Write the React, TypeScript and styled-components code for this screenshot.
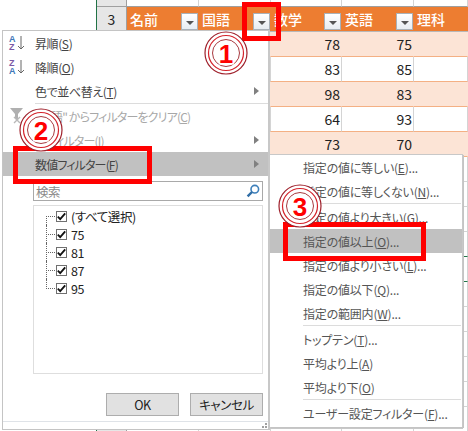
import React from 'react';
import styled, { createGlobalStyle } from 'styled-components';

const GlobalStyle = createGlobalStyle`
  html, body {
    margin: 0;
    padding: 0;
    background: #fff;
  }
  body {
    font-family: "Noto Sans CJK JP", "Liberation Sans", sans-serif;
    font-feature-settings: "palt";
  }
`;

const Page = styled.div`
  position: relative;
  width: 468px;
  height: 431px;
  overflow: hidden;
  background: #fff;
`;

/* sheet behind the menus */
const Sheet = styled.div`
  display: flex;
  flex-direction: column;
`;

const Row = styled.div<{ $height: number }>`
  display: grid;
  grid-template-columns: 97px 30px 72px 72px 71px 72px 54px;
  height: ${(p) => p.$height}px;
`;

const Gutter = styled.div`
  border-right: 1px solid #217346;
`;

const RowHead = styled.div`
  display: flex;
  align-items: center;
  justify-content: center;
  background: #e6e6e6;
  border-right: 1px solid #9f9f9f;
  border-bottom: 1px solid #9f9f9f;
  font-size: 14px;
  color: #222;
`;

const BlankCell = styled.div`
  border-right: 1px solid #d4d4d4;
  border-bottom: 1px solid #9f9f9f;
`;

const HeadCell = styled.div`
  display: flex;
  align-items: flex-end;
  justify-content: space-between;
  background: #ed7d31;
  border-bottom: 1px solid #b8b8b8;
  padding: 0 1px 1px 3px;
  color: #fff;
  font-size: 14px;
  font-weight: 500;
  font-feature-settings: normal;
`;

const HeadLabel = styled.span`
  align-self: center;
  line-height: 20px;
`;

const FilterButton = styled.span`
  display: flex;
  align-items: center;
  justify-content: center;
  box-sizing: border-box;
  width: 17px;
  height: 17px;
  background: linear-gradient(#fff, #e8edf2);
  border: 1px solid #a9b1b8;
  &::after {
    content: '';
    border-left: 4px solid transparent;
    border-right: 4px solid transparent;
    border-top: 4px solid #555;
    margin-top: 2px;
  }
`;

const Cell = styled.div<{ $pink?: boolean; $line: string }>`
  display: flex;
  align-items: center;
  justify-content: flex-end;
  box-sizing: border-box;
  background: ${(p) => (p.$pink ? '#fce4d6' : '#fff')};
  border-bottom: 1px solid ${(p) => p.$line};
  border-right: 1px solid ${(p) => (p.$pink ? 'transparent' : '#d4d4d4')};
  padding-right: 1px;
  font-size: 14px;
  color: #222;
`;

/* main filter dropdown */
const Menu = styled.div`
  position: absolute;
  left: 2px;
  top: 30px;
  box-sizing: border-box;
  width: 268px;
  height: 400px;
  display: flex;
  flex-direction: column;
  background: #fff;
  border: 1px solid #c4c4c4;
  border-right: 2px solid #c8c8c8;
  font-size: 12px;
  letter-spacing: -0.4px;
  color: #444;
`;

const MenuItem = styled.div<{ $active?: boolean; $disabled?: boolean; $tight?: boolean }>`
  display: flex;
  align-items: center;
  flex: none;
  height: 24px;
  padding: 0 8px 0 6px;
  background: ${(p) => (p.$active ? '#c1c1c1' : 'transparent')};
  color: ${(p) => (p.$disabled ? '#a8a8a8' : '#444')};
  letter-spacing: ${(p) => (p.$tight ? '-0.85px' : 'inherit')};
`;

const IconSlot = styled.span`
  display: flex;
  flex: none;
  width: 26px;
  align-items: center;
`;

const SortLetters = styled.span`
  display: flex;
  flex-direction: column;
  font-size: 9px;
  line-height: 8px;
  font-weight: 700;
  font-family: "Liberation Sans", sans-serif;
  width: 8px;
`;

const LetterA = styled.span`
  color: #3f78b8;
`;

const LetterZ = styled.span`
  color: #7b5aa6;
`;

const Arrow = styled.span`
  margin-left: auto;
  margin-right: 1px;
  border-left: 5px solid #808080;
  border-top: 4px solid transparent;
  border-bottom: 4px solid transparent;
`;

const Separator = styled.div<{ $left: number }>`
  flex: none;
  height: 1px;
  margin-left: ${(p) => p.$left}px;
  background: #dcdcdc;
`;

const SearchBox = styled.div`
  display: flex;
  align-items: center;
  justify-content: space-between;
  flex: none;
  box-sizing: border-box;
  height: 20px;
  margin: 5px 5px 0 30px;
  padding: 0 2px 0 2px;
  border: 1px solid #a9a9a9;
  font-size: 12.5px;
  color: #8a8a8a;
`;

const ValueList = styled.div`
  flex: none;
  box-sizing: border-box;
  height: 169px;
  margin: 4px 5px 0 30px;
  padding: 1px 0 0 12px;
  border: 1px solid #dedede;
  color: #222;
`;

const TreeRow = styled.div`
  position: relative;
  display: flex;
  align-items: center;
  height: 18px;
  padding-left: 10px;
  gap: 4px;
  font-size: 12.5px;
  &::before {
    content: '';
    position: absolute;
    left: 0;
    top: 9px;
    width: 9px;
    border-top: 1px dotted #666;
  }
  &::after {
    content: '';
    position: absolute;
    left: 0;
    top: 0;
    bottom: 0;
    border-left: 1px dotted #666;
  }
  &:first-child::after {
    top: 9px;
  }
  &:last-child::after {
    bottom: 8px;
  }
`;

const CheckBox = styled.span`
  display: flex;
  align-items: center;
  justify-content: center;
  box-sizing: border-box;
  width: 11px;
  height: 11px;
  border: 1px solid #707070;
  background: #fff;
`;

const ButtonBar = styled.div`
  display: flex;
  justify-content: flex-end;
  gap: 11px;
  flex: none;
  margin: 19px 5px 0 0;
`;

const DialogButton = styled.div`
  display: flex;
  align-items: center;
  justify-content: center;
  box-sizing: border-box;
  width: 73px;
  height: 23px;
  background: #e1e1e1;
  border: 1px solid #adadad;
  font-size: 12.5px;
  color: #222;
`;

const Footer = styled.div`
  display: flex;
  justify-content: flex-end;
  align-items: flex-end;
  flex: 1;
  margin-top: 5px;
  padding: 0 1px 1px 0;
  border-top: 1px solid #dfe3e8;
`;

const Grip = styled.span`
  width: 2px;
  height: 2px;
  background: #a0a0a0;
  box-shadow: -3px 0 #a0a0a0, 0 -3px #a0a0a0;
`;

/* number filter submenu */
const SubMenu = styled.div`
  position: absolute;
  left: 270px;
  top: 154px;
  box-sizing: border-box;
  width: 193px;
  height: 273px;
  display: flex;
  flex-direction: column;
  background: #fff;
  border-top: 1px solid #c8c8c8;
  border-right: 1px solid #c8c8c8;
  box-shadow: 1px 1px 0 #c4c4c4, 0 2px 0 #c8c8c8;
  font-size: 12px;
  letter-spacing: -0.2px;
`;

const SubItem = styled.div<{ $active?: boolean }>`
  display: flex;
  align-items: center;
  flex: none;
  height: 24px;
  padding-left: 33px;
  background: ${(p) => (p.$active ? '#c1c1c1' : 'transparent')};
  color: #555;
`;

const SubSeparator = styled(Separator)`
  margin-bottom: 1px;
  margin-right: 1px;
`;

/* annotations drawn on top of the screenshot */
const RedBox = styled.div<{ $x: number; $y: number; $w: number; $h: number }>`
  position: absolute;
  left: ${(p) => p.$x}px;
  top: ${(p) => p.$y}px;
  width: ${(p) => p.$w}px;
  height: ${(p) => p.$h}px;
  box-sizing: border-box;
  border: 5px solid #ff0000;
`;

const BadgeWrap = styled.svg<{ $x: number; $y: number }>`
  position: absolute;
  left: ${(p) => p.$x}px;
  top: ${(p) => p.$y}px;
  width: 44px;
  height: 44px;
`;

const BadgeDigit = styled.text`
  font-family: "Liberation Sans", sans-serif;
  font-size: 26px;
  font-weight: 700;
  fill: #ff0000;
  text-anchor: middle;
`;

const Badge = ({ n, x, y }: { n: number; x: number; y: number }) => (
  <BadgeWrap $x={x} $y={y} viewBox="0 0 44 44">
    <circle cx="22" cy="22" r="21" fill="#fff" stroke="#9e1f2a" strokeWidth="1.2" />
    <circle cx="22" cy="22" r="17.5" fill="#fff" stroke="#d4242c" strokeWidth="1.2" />
    <circle cx="22" cy="22" r="13.5" fill="#fff" stroke="#a83a40" strokeWidth="1" />
    <BadgeDigit x="22" y="31.5" stroke="#fff" strokeWidth="3" paintOrder="stroke">
      {n}
    </BadgeDigit>
  </BadgeWrap>
);

const Label = ({ text, k, tail }: { text: string; k: string; tail?: string }) => (
  <span>
    {text}(<u>{k}</u>){tail}
  </span>
);

const SortIcon = ({ flip }: { flip?: boolean }) => (
  <IconSlot>
    <SortLetters>
      {flip ? <LetterZ>Z</LetterZ> : <LetterA>A</LetterA>}
      {flip ? <LetterA>A</LetterA> : <LetterZ>Z</LetterZ>}
    </SortLetters>
    <svg width="8" height="16" viewBox="0 0 8 16">
      <path d="M4 1V14M1 11l3 3 3-3" fill="none" stroke="#666" strokeWidth="1" />
    </svg>
  </IconSlot>
);

const ClearIcon = () => (
  <IconSlot>
    <svg width="20" height="18" viewBox="0 0 20 18">
      <path d="M1 1h13L9 7v5H6V7z" fill="#b0b0b0" />
      <path d="M5 10l6 6M11 10l-6 6" stroke="#b8b8b8" strokeWidth="1.4" />
    </svg>
  </IconSlot>
);

const SearchIcon = () => (
  <svg width="14" height="14" viewBox="0 0 14 14">
    <circle cx="8.8" cy="5.2" r="3.8" fill="none" stroke="#3d7fba" strokeWidth="1.6" />
    <path d="M6 8L1.6 12.4" stroke="#2f6da6" strokeWidth="2.4" />
  </svg>
);

const Check = () => (
  <svg width="9" height="9" viewBox="0 0 9 9">
    <path d="M0.8 4.6l2.4 2.6L8.2 1.4" fill="none" stroke="#111" strokeWidth="1.8" />
  </svg>
);

const heads = ['名前', '国語', '数学', '英語', '理科'];
const marks = [
  ['78', '75'],
  ['83', '85'],
  ['98', '83'],
  ['64', '93'],
  ['73', '70'],
];
const emptyLines = ['#d4d4d4', '#d4d4d4', '#d4d4d4', '#217346', '#217346', '#d4d4d4', '#d4d4d4', '#d4d4d4', '#d4d4d4', '#d4d4d4', '#d4d4d4'];
const values = ['(すべて選択)', '75', '81', '87', '95'];

const subGroups = [
  [
    ['指定の値に等しい', 'E', '...'],
    ['指定の値に等しくない', 'N', '...'],
  ],
  [
    ['指定の値より大きい', 'G', '...'],
    ['指定の値以上', 'O', '...'],
    ['指定の値より小さい', 'L', '...'],
    ['指定の値以下', 'Q', '...'],
    ['指定の範囲内', 'W', '...'],
  ],
  [
    ['トップテン', 'T', '...'],
    ['平均より上', 'A', ''],
    ['平均より下', 'O', ''],
  ],
  [['ユーザー設定フィルター', 'F', '...']],
];

const App = () => (
  <Page>
    <GlobalStyle />
    <Sheet>
      <Row $height={7}>
        <Gutter />
        <RowHead />
        {heads.map((h) => (
          <BlankCell key={h} />
        ))}
      </Row>
      <Row $height={25}>
        <Gutter />
        <RowHead>3</RowHead>
        {heads.map((h, i) => (
          <HeadCell key={h}>
            <HeadLabel>{h}</HeadLabel>
            {i < 4 && <FilterButton />}
          </HeadCell>
        ))}
      </Row>
      {marks.map((m, i) => (
        <Row $height={25} key={i}>
          <Gutter />
          <RowHead />
          <Cell $pink={i % 2 === 0} $line="#f4b084" />
          <Cell $pink={i % 2 === 0} $line="#f4b084" />
          <Cell $pink={i % 2 === 0} $line="#f4b084">{m[0]}</Cell>
          <Cell $pink={i % 2 === 0} $line="#f4b084">{m[1]}</Cell>
          <Cell $pink={i % 2 === 0} $line="#f4b084" />
        </Row>
      ))}
      {emptyLines.map((line, i) => (
        <Row $height={25} key={i}>
          <Gutter />
          <RowHead />
          {heads.map((h) => (
            <Cell key={h} $line={line} />
          ))}
        </Row>
      ))}
    </Sheet>

    <Menu>
      <MenuItem>
        <SortIcon />
        <Label text="昇順" k="S" />
      </MenuItem>
      <MenuItem>
        <SortIcon flip />
        <Label text="降順" k="O" />
      </MenuItem>
      <MenuItem>
        <IconSlot />
        <Label text="色で並べ替え" k="T" />
        <Arrow />
      </MenuItem>
      <Separator $left={32} />
      <MenuItem $disabled $tight>
        <ClearIcon />
        <Label text={'"国語" からフィルターをクリア'} k="C" />
      </MenuItem>
      <MenuItem $disabled $tight>
        <IconSlot />
        <Label text="色フィルター" k="I" />
        <Arrow />
      </MenuItem>
      <MenuItem $active $tight>
        <IconSlot />
        <Label text="数値フィルター" k="F" />
        <Arrow />
      </MenuItem>
      <SearchBox>
        検索
        <SearchIcon />
      </SearchBox>
      <ValueList>
        {values.map((v) => (
          <TreeRow key={v}>
            <CheckBox>
              <Check />
            </CheckBox>
            {v}
          </TreeRow>
        ))}
      </ValueList>
      <ButtonBar>
        <DialogButton>OK</DialogButton>
        <DialogButton>キャンセル</DialogButton>
      </ButtonBar>
      <Footer>
        <Grip />
      </Footer>
    </Menu>

    <SubMenu>
      {subGroups.map((group, g) => (
        <React.Fragment key={g}>
          {g > 0 && <SubSeparator $left={33} />}
          {group.map(([text, k, tail]) => (
            <SubItem key={text} $active={text === '指定の値以上'}>
              <Label text={text} k={k} tail={tail} />
            </SubItem>
          ))}
        </React.Fragment>
      ))}
    </SubMenu>

    <RedBox $x={242} $y={2} $w={39} $h={39} />
    <RedBox $x={13} $y={146} $w={139} $h={38} />
    <RedBox $x={283} $y={222} $w={143} $h={39} />
    <Badge n={1} x={204} y={31} />
    <Badge n={2} x={19} y={108} />
    <Badge n={3} x={278} y={184} />
  </Page>
);

export default App;
